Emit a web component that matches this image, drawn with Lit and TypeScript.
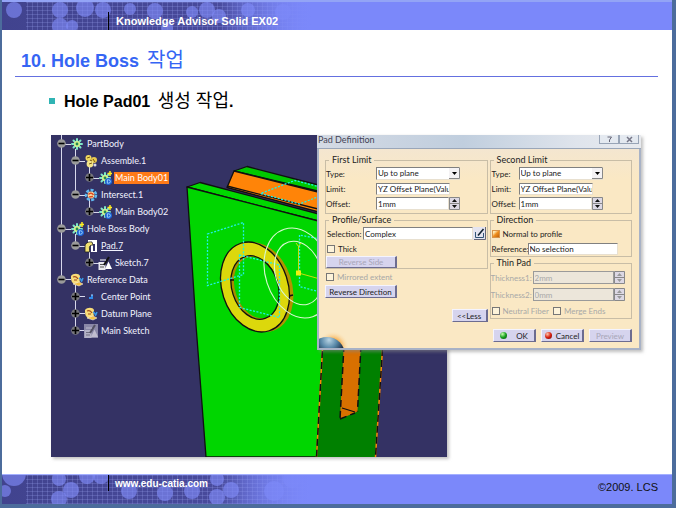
import { LitElement, html, css, svg } from "lit";
import { customElement, property } from "lit/decorators.js";

type IconName = "body" | "solid" | "assemble" | "intersect" | "pad" | "sketch" | "set" | "point" | "dimsketch";

interface TreeNode {
  label: string;
  level: number;
  icon: IconName;
  open?: boolean;
  state?: "selected" | "active";
}

const NODES: TreeNode[] = [
  { label: "PartBody", level: 0, icon: "body", open: true },
  { label: "Assemble.1", level: 1, icon: "assemble", open: true },
  { label: "Main Body01", level: 2, icon: "solid", state: "selected" },
  { label: "Intersect.1", level: 1, icon: "intersect", open: true },
  { label: "Main Body02", level: 2, icon: "solid" },
  { label: "Hole Boss Body", level: 0, icon: "solid", open: true },
  { label: "Pad.7", level: 1, icon: "pad", open: true, state: "active" },
  { label: "Sketch.7", level: 2, icon: "sketch" },
  { label: "Reference Data", level: 0, icon: "set", open: true },
  { label: "Center Point", level: 1, icon: "point" },
  { label: "Datum Plane", level: 1, icon: "set" },
  { label: "Main Sketch", level: 1, icon: "dimsketch" },
];

const gear = svg`
  <g stroke="#7fe8c8" stroke-width="2" stroke-linecap="round">
    <path d="M7 2V12M2 7H12M3.5 3.5L10.5 10.5M10.5 3.5L3.5 10.5"/>
  </g>
  <circle cx="7" cy="7" r="3" fill="#d8f08a"/>
  <circle cx="7" cy="7" r="1.4" fill="#208a50"/>`;

const sketch = svg`
  <rect x="0.5" y="6" width="7" height="8" fill="#e8e8ee"/>
  <path d="M2 8.5H6M2 11H6" stroke="#555" stroke-width="1"/>
  <path d="M7 13L10.5 5.5L14 13Z" fill="#fff"/>
  <path d="M11 1L6 9" stroke="#111" stroke-width="2"/>
  <path d="M2 4H8" stroke="#fff" stroke-width="1"/>`;

const ICONS: Record<IconName, unknown> = {
  body: gear,
  solid: svg`${gear}
    <circle cx="10.5" cy="10.5" r="3.6" fill="#1c5fd0"/>
    <path d="M9.3 8.8H10.6A1.7 1.7 0 0 1 10.6 12.2H9.3Z" fill="none" stroke="#9fd8ff" stroke-width="1"/>
    <path d="M12 0V5M9.500 2.500H14" stroke="#ffee20" stroke-width="1.500"/>`,
  assemble: svg`
    <circle cx="4.500" cy="4" r="3" fill="#f0d860"/><circle cx="10" cy="6" r="3" fill="#e8c850"/>
    <circle cx="6" cy="10" r="3.400" fill="#f4e48a"/>
    <path d="M3 4L6 3M9 5L11 8M5 10L8 9M6 6L8 7" stroke="#7a5a10" stroke-width="1"/>
    <circle cx="11" cy="11" r="1.500" fill="#d8d8e8"/>`,
  intersect: svg`
    <circle cx="7" cy="7" r="5" fill="none" stroke="#60b8f0" stroke-width="2.500" stroke-dasharray="3 1.500"/>
    <circle cx="7" cy="7" r="3.400" fill="#f4d8a0"/>
    <path d="M4.500 6.500C6 4.500 8.500 5 9.500 7M5 9L9 8.500" stroke="#e04820" stroke-width="1.400" fill="none"/>`,
  pad: svg`
    <path d="M4 1H13V13H7V4H4Z" fill="#fff"/>
    <path d="M9 5H11V12H9Z" fill="#343264"/>
    <path d="M1 13V8C1 4 4 2.500 8 3L9 6C6 6 5 7.500 5.500 10V13Z" fill="#f0e070" stroke="#222" stroke-width="0.800"/>`,
  sketch,
  dimsketch: svg`<rect width="14" height="14" fill="#8a88a8"/><g opacity="0.450">${sketch}</g>`,
  set: svg`
    <path d="M1 3C3 0 9 0 10 3C10 6 9 7 10 9L4 11C1 9 1 6 1 3Z" fill="#f8dc78"/>
    <path d="M3 4C5 3 7 4 8 6M4 7H7" stroke="#a04818" stroke-width="1.200" fill="none"/>
    <path d="M9 5C13 6 10 12 13 5" stroke="#3a9ae8" stroke-width="1.500" fill="none"/>
    <path d="M3 11L9 13L13 11L9 9Z" fill="#f4c040" stroke="#fff" stroke-width="0.500"/>`,
  point: svg`<path d="M7 5H9V9H5V7H7Z" fill="#2f8ae8"/><path d="M8 4V6" stroke="#9fd0ff"/>`,
};

@customElement("spec-tree")
class SpecTree extends LitElement {
  static styles = css`
    :host { display: block; position: relative; }
    .links { position: absolute; left: 0; top: 0; width: 60px; height: 204px; }
    ul { list-style: none; margin: 0; padding: 0; position: relative; }
    li { display: flex; align-items: center; height: 17px; padding-left: 6px; }
    .level1 { padding-left: 20px; }
    .level2 { padding-left: 34px; }
    .toggle { width: 9px; height: 9px; margin-right: 4px; padding: 0; border: 0; background: none; display: block; }
    svg { display: block; }
    .icon { width: 14px; height: 14px; margin-right: 2px; flex: none; }
    .label { font: 9px/12px Lato, "Open Sans", sans-serif; color: #f2f2ff; white-space: nowrap; padding: 0 1px; }
    .selected { background: #ff7a18; color: #fff; }
    .active { text-decoration: underline; }
  `;
  render() {
    return html`
      <svg class="links" viewBox="0 0 60 204" aria-hidden="true">
        <path d="M10.500 0V144M24.500 14V60M38.500 30V43M38.500 64V77M24.500 99V111M38.500 115V128M24.500 150V196M10.500 9.500H20M10.500 94.500H20M10.500 144.500H20M24.500 26.500H34M24.500 60.500H34M38.500 43.500H48M38.500 77.500H48M24.500 111.500H34M38.500 128.500H48M24.500 161.500H34M24.500 178.500H34M24.500 195.500H34" fill="none" stroke="#d8d8ec"/>
      </svg>
      <ul>
        ${NODES.map((n) => html`
          <li class="level${n.level}">
            <button class="toggle" aria-label="${n.open ? "Collapse" : "Expand"} ${n.label}">
              <svg width="9" height="9" viewBox="0 0 9 9">
                <circle cx="4.500" cy="4.500" r="4.300" fill=${n.open ? "#9a9a9a" : "#77777c"}/>
                <path d=${n.open ? "M1.500 4.500H7.500" : "M1 4.500H8M4.500 1V8"} stroke="#000" stroke-width="1.600"/>
              </svg>
            </button>
            <svg class="icon" viewBox="0 0 14 14" fill="none" aria-hidden="true">${ICONS[n.icon]}</svg>
            <span class="label ${n.state ?? ""}">${n.label}</span>
          </li>`)}
      </ul>`;
  }
}

@customElement("model-view")
class ModelView extends LitElement {
  static styles = css`
    :host { display: block; }
    svg { display: block; width: 396px; height: 322px; }
  `;
  render() {
    return html`
      <svg viewBox="51 135 396 322" fill="none" role="img" aria-label="Plate with hole boss">
        <g stroke="#101010" stroke-width="1.300" stroke-linejoin="round">
          <path d="M234 171L247 166.500L330 188V194L234 171Z" fill="#00c800"/>
          <path d="M234 171L330 195V215L227 187.500Z" fill="#ff8408"/>
          <path d="M227 186L330 212"/>
          <path d="M187 187L200 182.500L330 217V224Z" fill="#00d800"/>
          <path d="M187 187L330 224L323 349L316.500 457H206L196 325Z" fill="#00d600"/>
        </g>
        <path d="M330 220H390L382.500 349L375.500 457H316.500L323 349Z" fill="#008000"/>
        <path d="M323 340L316.500 457M382.500 349L375.500 457" stroke="#ff8408" stroke-width="1.500"/>
        <path d="M323 340L316.500 457M382.500 349L375.500 457" stroke="#101010" stroke-width="1.500" stroke-dasharray="7 4"/>
        <path d="M344 340L340 419L357.500 411.500L361 340Z" fill="#d87000"/>
        <path d="M344 345L340 419M361 345L357.500 411.500M340 419L355 413" stroke="#101010" stroke-width="1.500" stroke-dasharray="7 4"/>
        <path d="M342 408L355 412" stroke="#101010" stroke-width="1.300"/>

        <ellipse cx="259" cy="287" rx="33" ry="46" transform="rotate(-18 259 287)" fill="#b09400"/>
        <ellipse cx="255" cy="287" rx="33" ry="46" transform="rotate(-18 255 287)" fill="#dcd80c" stroke="#101010" stroke-width="1.300"/>
        <ellipse cx="255" cy="287.500" rx="23" ry="32.500" transform="rotate(-18 255 287.500)" fill="#a88c00"/>
        <ellipse cx="257" cy="287.500" rx="22" ry="31.500" transform="rotate(-18 257 287.500)" fill="#00d600"/>
        <ellipse cx="255" cy="287.500" rx="23" ry="32.500" transform="rotate(-18 255 287.500)" stroke="#101010" stroke-width="1.300"/>
        <path d="M230 280H234M289 296L293 295" stroke="#101010" stroke-width="1.500"/>

        <g stroke="#20f0e8" stroke-width="1.300" stroke-dasharray="2 1.500">
          <path d="M207.500 234L243.500 222.500V274.500L207.500 285.500Z"/>
          <path d="M239.500 255L279.500 265V317.500L239.500 307.500Z"/>
          <path d="M320 239L299.500 235V286.500L320 292"/>
          <path d="M320 187L295 180.500L260.500 193.500L299.500 204L320 196"/>
        </g>
        <g stroke="#d8f8d0" stroke-width="1.100">
          <ellipse cx="298.500" cy="273" rx="33" ry="46" transform="rotate(-18 298.500 273)"/>
          <ellipse cx="298.500" cy="273" rx="23" ry="32.500" transform="rotate(-18 298.500 273)"/>
        </g>
        <path d="M298.500 273V248M298.500 273L320 279M296 243L298.500 246.500L301 243M298.500 246V250" stroke="#c8e010"/>
        <rect x="296" y="270.500" width="5" height="5" fill="#f0f010"/>
      </svg>`;
  }
}

@customElement("pad-dialog")
class PadDialog extends LitElement {
  static styles = css`
    :host {
      display: block; box-sizing: border-box; width: 324px;
      border: 2px solid #a8b2c6; border-top: 0; background: #fae8c4;
      box-shadow: 2px 2px 3px #8888; color: #222;
      font: 8px/12px Lato, "Open Sans", sans-serif;
    }
    * { box-sizing: border-box; }
    button, input, select { font: inherit; color: inherit; border-radius: 0; margin: 0; }
    .bar { display: flex; align-items: center; justify-content: space-between; height: 14px; padding: 0 2px 3px 0;
      background: linear-gradient(90deg, #d4dae4, #c0cede 45%, #dfe4ec 80%, #e8eaee); border-bottom: 1px solid #9aa6b8; margin: 0 -2px; color: #445; }
    h2 { margin: 0; padding-left: 1px; font: 9px/10px Lato, sans-serif; }
    .caps { display: flex; align-self: flex-start; }
    .cap { width: 20px; height: 9px; padding: 0; border: 1px solid #98a4b6; border-top: 0; background: #e4e9f0; display: grid; place-items: center; }
    .cols { display: flex; gap: 2px; padding: 5px 7px 0 6px; background: linear-gradient(#f4e6d0, #fae8c4 30px); }
    .left { flex: 162; min-width: 0; }
    .right { flex: 142; min-width: 0; }
    fieldset { margin: 0; padding: 0 0 2px; border: 1px solid #c8bda6; min-width: 0; display: block; }
    fieldset.flush { padding-bottom: 0; }
    legend { margin-left: 3px; padding: 0 3px; height: 12px; font-size: 9px; }
    .row { display: flex; align-items: center; height: 15px; }
    .tall { height: 17px; }
    .row > label:first-child { flex: none; white-space: nowrap; }
    .wide > label:first-child { width: 50px; }
    .thin > label:first-child { width: 28px; padding-left: 1px; }
    .mid > label:first-child { width: 42px; }
    .pick > label:first-child { width: 37px; padding-left: 1px; }
    .text, select { min-width: 0; height: 12px; padding: 0 1px; border: 1px solid #808080; border-right-color: #e8e0d0; border-bottom-color: #e8e0d0; background: #fff; line-height: 10px; }
    .short { width: 74px; padding-right: 0; }
    .ref { width: 90px; }
    .field { position: relative; display: flex; width: 84px; height: 13px; }
    .field .text, .field select { width: 100%; height: 13px; line-height: 11px; appearance: none; }
    .field.long { width: 92px; }
    .grow { flex: 1; margin-right: 1px; }
    .grow .text { flex: 1; width: auto; }
    .arrow { position: absolute; right: 0; top: 1px; width: 11px; height: 11px; pointer-events: none; }
    .spin { flex: none; padding: 0; border: 0; background: #d8d4e0; display: block; }
    svg { display: block; }
    .off { color: #a8a8a8; }
    .off .text { background: #ece6da; border-color: #9a9a9a; }
    .check { display: flex; align-items: center; gap: 3px; padding-left: 1px; white-space: nowrap; }
    .check input { appearance: none; width: 8px; height: 8px; border: 1px solid #777; background: #fdf3da; }
    .check input:checked { background: linear-gradient(135deg, #ffe8b0 20%, #f09020 50%, #c06008); border-color: #d8944a; }
    .duo { gap: 3px; }
    .push { display: flex; align-items: center; justify-content: center; gap: 9px; height: 13px; padding: 0; background: #d6d4ee; border: 1px solid; border-color: #f4f4ff #6c6c90 #6c6c90 #f4f4ff; border-right-width: 2px; white-space: nowrap; }
    .push:disabled { color: #a8a6b8; }
    .side { width: 71px; height: 12px; }
    .rev { width: 72px; margin-top: 1px; }
    .less { width: 36px; margin: 11px 0 0 auto; }
    .acts { position: relative; display: flex; justify-content: flex-end; gap: 5px; height: 26px; padding: 7px 7px 0 0; overflow: hidden; }
    .acts .push { width: 43px; }
    .mark { flex: none; width: 7px; height: 7px; border-radius: 50%; background: radial-gradient(circle at 35% 30%, #c8ffb0, #18a020 50%, #064a08); }
    .stop { background: radial-gradient(circle at 35% 30%, #ffc8b0, #d82010 50%, #600404); }
    .acts .pair { gap: 4px; }
    .globe { position: absolute; left: 0; bottom: 0; width: 34px; height: 20px; }
  `;
  combo(id: string, label: string) {
    return html`<label for=${id}>${label}</label>
      <div class="field"><select id=${id}><option>Up to plane</option></select>
        <svg class="arrow" viewBox="0 0 11 11"><rect width="11" height="11" fill="#f4f2f4"/><path d="M10.500 0V10.500H0" fill="none" stroke="#888"/><path d="M3 4H8L5.500 7Z" fill="#000"/></svg>
      </div>`;
  }
  spinner(id: string, label: string, value: string, extra = "", off = false) {
    const ink = off ? "#999" : "#111";
    return html`<label for=${id}>${label}</label>
      <div class="field ${extra}"><input class="text" id=${id} .value=${value} ?disabled=${off}>
        <button class="spin" aria-label="Step ${label}" ?disabled=${off}>
          <svg width="11" height="13" viewBox="0 0 11 13"><path d="M0.500 0.500H10.500V12.500H0.500ZM0 6.500H11" fill="#dcd8e4" stroke="#888"/><path d="M3 5L5.500 2L8 5ZM3 8L5.500 11L8 8Z" fill=${ink}/></svg>
        </button>
      </div>`;
  }
  render() {
    return html`
      <div class="bar"><h2>Pad Definition</h2>
        <div class="caps">
          <button class="cap" aria-label="Help"><svg width="7" height="7" viewBox="0 0 7 7"><path d="M1.500 1H5.500L3.500 4V6" fill="none" stroke="#667"/></svg></button>
          <button class="cap" aria-label="Close"><svg width="9" height="7" viewBox="0 0 9 7"><path d="M2 1L7 6M7 1L2 6" stroke="#778" stroke-width="1.500"/></svg></button>
        </div>
      </div>
      <div class="cols">
        <div class="left">
          <fieldset><legend>First Limit</legend>
            <div class="row wide">${this.combo("t1", "Type:")}</div>
            <div class="row wide"><label for="l1">Limit:</label><input class="text short" id="l1" value="YZ Offset Plane(Valu"></div>
            <div class="row wide">${this.spinner("o1", "Offset:", "1mm")}</div>
          </fieldset>
          <fieldset class="flush"><legend>Profile/Surface</legend>
            <div class="row pick"><label for="sel">Selection:</label>
              <div class="field grow"><input class="text" id="sel" value="Complex">
                <button class="spin" aria-label="Edit sketch"><svg width="13" height="13" viewBox="0 0 13 13"><rect width="13" height="13" fill="#e4e4f0"/><path d="M2.500 5V10.500H10.500V6" fill="none" stroke="#357"/><path d="M5 8.500L10.500 2" stroke="#123" stroke-width="1.600"/><path d="M1 12.500H12.500V0" fill="none" stroke="#667"/></svg></button>
              </div>
            </div>
            <div class="row"><label class="check"><input type="checkbox">Thick</label></div>
            <button class="push side" disabled>Reverse Side</button>
          </fieldset>
          <div class="row off"><label class="check"><input type="checkbox" disabled>Mirrored extent</label></div>
          <button class="push rev">Reverse Direction</button>
          <button class="push less">&lt;&lt;Less</button>
        </div>
        <div class="right">
          <fieldset><legend>Second Limit</legend>
            <div class="row thin">${this.combo("t2", "Type:")}</div>
            <div class="row thin"><label for="l2">Limit:</label><input class="text short" id="l2" value="YZ Offset Plane(Valu"></div>
            <div class="row thin">${this.spinner("o2", "Offset:", "1mm")}</div>
          </fieldset>
          <fieldset class="flush"><legend>Direction</legend>
            <div class="row"><label class="check"><input type="checkbox" checked>Normal to profile</label></div>
            <div class="row pick"><label for="ref">Reference:</label><input class="text ref" id="ref" value="No selection"></div>
          </fieldset>
          <fieldset class="flush"><legend>Thin Pad</legend>
            <div class="row tall mid off">${this.spinner("k1", "Thickness1:", "2mm", "long", true)}</div>
            <div class="row tall mid off">${this.spinner("k2", "Thickness2:", "0mm", "long", true)}</div>
            <div class="row duo off">
              <label class="check"><input type="checkbox" disabled>Neutral Fiber</label>
              <label class="check"><input type="checkbox" disabled>Merge Ends</label>
            </div>
          </fieldset>
        </div>
      </div>
      <div class="acts">
        <svg class="globe" viewBox="0 0 34 20">
          <defs>
            <radialGradient id="glow" cx="14" cy="19" r="16" gradientUnits="userSpaceOnUse"><stop offset="0.500" stop-color="#f8b050"/><stop offset="1" stop-color="#fae8c4" stop-opacity="0"/></radialGradient>
            <radialGradient id="ball" cx="10" cy="12" r="16" gradientUnits="userSpaceOnUse"><stop offset="0" stop-color="#b8d4e4"/><stop offset="0.500" stop-color="#5888a8"/><stop offset="1" stop-color="#1c2c40"/></radialGradient>
          </defs>
          <circle cx="14" cy="19" r="16" fill="url(#glow)"/>
          <circle cx="8" cy="27" r="18" fill="url(#ball)"/>
        </svg>
        <button class="push"><span class="mark"></span>OK</button>
        <button class="push pair"><span class="mark stop"></span>Cancel</button>
        <button class="push" disabled>Preview</button>
      </div>`;
  }
}

const HEAD_DOTS = [[12, 8, 8], [58, 8, 8], [58, 24, 8], [83, 6, 9], [101, 8, 8], [70, 24, 6], [153, 9, 8], [190, 10, 6], [205, 8, 8], [217, 14, 7], [128, 7, 6], [246, 8, 7], [281, 10, 8], [165, 26, 6]];
const FOOT_DOTS = [[12, -1, 12], [3, 16, 6], [57, 4, 7], [57, 24, 8], [69, 15, 8], [85, 1, 8], [99, 1, 8], [127, 16, 8], [163, 18, 8], [190, 16, 8], [215, 4, 7], [215, 22, 8], [229, 15, 8], [272, 16, 10], [290, 4, 9]];

@customElement("dot-strip")
class DotStrip extends LitElement {
  @property({ attribute: false }) dots: number[][] = [];
  static styles = css`
    :host { display: block; overflow: hidden; }
    svg { display: block; width: 310px; height: 30px; }
  `;
  render() {
    return html`
      <svg viewBox="0 0 310 30" aria-hidden="true">
        <defs>
          <linearGradient id="fade" x1="0" x2="1"><stop offset="0" stop-color="#41438e"/><stop offset="0.700" stop-color="#484a9c"/><stop offset="1" stop-color="#7b88fa"/></linearGradient>
          <linearGradient id="veil" x1="0" x2="1"><stop offset="0.700" stop-color="#7b88fa" stop-opacity="0"/><stop offset="1" stop-color="#7b88fa"/></linearGradient>
          <pattern id="mesh" width="5" height="4" patternUnits="userSpaceOnUse"><path d="M0.500 0V4M0 0.500H5" stroke="#9aa2f0" stroke-opacity="0.250"/></pattern>
        </defs>
        <rect width="310" height="30" fill="url(#fade)"/>
        <rect x="24" width="286" height="30" fill="url(#mesh)"/>
        ${this.dots.map(([x, y, r]) => svg`<circle cx=${x} cy=${y} r=${r} fill="#7f8bf6" fill-opacity="0.650"/>`)}
        <rect width="310" height="30" fill="url(#veil)"/>
      </svg>`;
  }
}

@customElement("app-root")
class AppRoot extends LitElement {
  static styles = css`
    :host {
      display: flex; flex-direction: column; box-sizing: border-box; min-height: 100vh;
      border: solid #4c6c9c; border-width: 0 4px 4px 2px; background: #fff;
      font-family: "Liberation Sans", "Noto Sans CJK KR", sans-serif;
    }
    .band { position: relative; display: flex; height: 30px; box-sizing: border-box; background: #7b88fa; border-top: 2px solid #93a4f6; }
    .foot { border-top-width: 1px; border-top-color: #a4b0ff; }
    dot-strip { position: absolute; inset: 0 auto 0 0; }
    .name { position: relative; margin: 0 0 0 106px; border-left: 1px solid #000; padding-left: 7px; color: #fff; font-size: 11px; font-weight: bold; white-space: nowrap; }
    .band .top { margin-top: 10px; line-height: 18px; }
    .site { height: 16px; line-height: 18px; font-size: 10px; padding-left: 6px; text-decoration: none; }
    .copy { margin: 0 14px 0 auto; font-size: 11px; line-height: 24px; color: #111; }
    h1 { margin: 0 14px 0 13px; padding: 17px 0 0 6px; height: 47px; box-sizing: border-box; border-bottom: 1px solid #6470e0; color: #3565f4; font-size: 18px; line-height: 28px; }
    .kr { font-weight: normal; font-size: 18px; line-height: 20px; margin-left: 3px; }
    h1 .kr { font-size: 20px; }
    main { flex: 1; }
    .point { display: flex; align-items: center; gap: 9px; margin: 13px 0 21px 47px; font-size: 16px; line-height: 24px; height: 24px; font-weight: bold; color: #000; }
    .point::before { content: ""; width: 6px; height: 6px; margin-bottom: 3px; background: #30b4b4; }
    .shot { position: relative; margin: 0 225px 16px 49px; background: #343264; box-shadow: 2px 2px 3px #9999; }
    spec-tree { position: absolute; left: 0; top: 0; }
    pad-dialog { position: absolute; left: 266px; top: 0; }
  `;
  render() {
    return html`
      <header class="band">
        <dot-strip .dots=${HEAD_DOTS}></dot-strip>
        <div class="name top">Knowledge Advisor Solid EX02</div>
      </header>
      <main>
        <h1>10. Hole Boss <span class="kr">작업</span></h1>
        <div class="point"><span>Hole Pad01 <span class="kr">생성 작업</span>.</span></div>
        <div class="shot">
          <model-view></model-view>
          <spec-tree></spec-tree>
          <pad-dialog></pad-dialog>
        </div>
      </main>
      <footer class="band foot">
        <dot-strip .dots=${FOOT_DOTS}></dot-strip>
        <a class="name site" href="#home">www.edu-catia.com</a>
        <div class="copy">©2009. LCS</div>
      </footer>`;
  }
}
